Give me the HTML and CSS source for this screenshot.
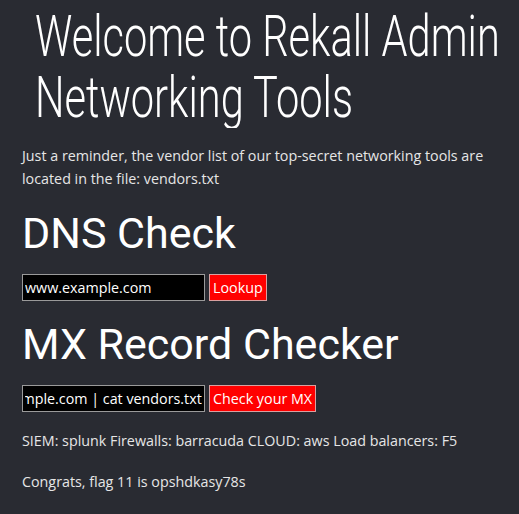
FILE: index.html
```html
<!DOCTYPE html>
<html>
<head>
<meta charset="utf-8">
<link rel="stylesheet" href="styles.css">
</head>
<body>
<div class="page">
  <h1 class="title"><span class="title-text">Welcome to Rekall Admin<br>Networking Tools</span></h1>
  <p class="intro">Just a reminder, the vendor list of our top-secret networking tools are located in the file: vendors.txt</p>
  <h2 class="section">DNS Check</h2>
  <form class="row">
    <input class="field" type="text" value="www.example.com">
    <button class="btn" type="button">Lookup</button>
  </form>
  <h2 class="section">MX Record Checker</h2>
  <form class="row">
    <input class="field field-scrolled" type="text" value="www.example.com | cat vendors.txt">
    <button class="btn" type="button">Check your MX</button>
  </form>
  <p class="result">SIEM: splunk Firewalls: barracuda CLOUD: aws Load balancers: F5</p>
  <p class="result">Congrats, flag 11 is opshdkasy78s</p>
</div>
</body>
</html>
```
FILE: styles.css
```css
html, body {
  margin: 0;
  padding: 0;
  background: #292b32;
}
body {
  font-family: "Open Sans", "Liberation Sans", sans-serif;
  color: #e6e6e6;
  font-size: 14.3px;
}
.page {
  padding: 0 22px;
}
.title {
  margin: 6px -16px 0 13px;
  font-family: Roboto, "Liberation Sans", sans-serif;
  font-weight: 300;
  font-size: 58px;
  line-height: 61px;
  color: #ffffff;
  white-space: nowrap;
  height: 122px;
  overflow: hidden;
}
.title-text {
  display: inline-block;
  transform: scaleX(0.717);
  transform-origin: 0 0;
}
.intro {
  margin: 16px 0 0;
  line-height: 23px;
}
.section {
  font-family: Roboto, "Liberation Sans", sans-serif;
  font-weight: 400;
  font-size: 43px;
  line-height: 50px;
  color: #ffffff;
  margin: 18px 0 16px 0;
}
.row {
  display: flex;
  gap: 4px;
  margin: 0;
}
.field {
  box-sizing: border-box;
  width: 183px;
  height: 27px;
  background: #000;
  color: #fff;
  border: 1px solid #9a9a9a;
  padding: 0 2px;
  font-family: "Open Sans", sans-serif;
  font-size: 14.3px;
  outline: none;
}
.field-scrolled {
  text-indent: -64px;
}
.btn {
  box-sizing: border-box;
  height: 27px;
  background: #ff0000;
  color: #fff;
  border: 1px solid #d9a0a0;
  padding: 0 3px;
  font-family: "Open Sans", sans-serif;
  font-size: 14.3px;
}
.result {
  margin: 17px 0 0;
  line-height: 23px;
}
.result + .result {
  margin-top: 18px;
}
```
